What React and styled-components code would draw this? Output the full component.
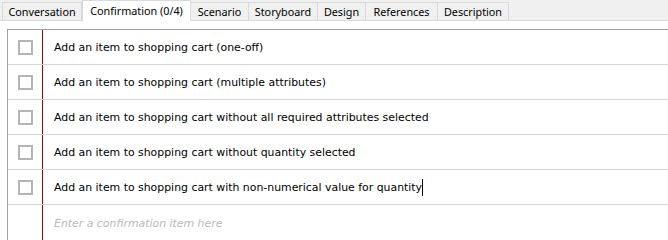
import styled, { createGlobalStyle } from "styled-components";

const Global = createGlobalStyle`
  body {
    margin: 0;
    background: #ffffff;
    font-family: "DejaVu Sans", Tahoma, sans-serif;
  }
`;

const Page = styled.div`
  width: 668px;
  height: 240px;
  overflow: hidden;
  background: #ffffff;
`;

const TabBar = styled.div`
  display: flex;
  align-items: flex-end;
  height: 21px;
  padding-left: 2px;
  background: #f0f0f0;
  border-bottom: 1px solid #d9d9d9;
  box-sizing: border-box;
`;

const Tab = styled.div`
  box-sizing: border-box;
  width: ${(p) => p.w}px;
  height: ${(p) => (p.active ? "21px" : "18px")};
  margin-bottom: ${(p) => (p.active ? "-1px" : "0")};
  padding-top: ${(p) => (p.active ? "2px" : "1px")};
  background: ${(p) => (p.active ? "#ffffff" : "#f0f0f0")};
  border: 1px solid #d9d9d9;
  border-bottom: none;
  border-left: ${(p) => (p.first || p.active ? "1px solid #d9d9d9" : "none")};
  font-family: "Noto Sans", sans-serif;
  font-size: 10.8px;
  line-height: 15px;
  text-align: center;
  color: #000000;
  white-space: nowrap;
`;

const Pane = styled.div`
  padding: 8px 0 0 7px;
`;

const List = styled.div`
  border-top: 1px solid #a0a0a0;
  border-left: 1px solid #a0a0a0;
`;

const Row = styled.div`
  display: flex;
  height: 35px;
  box-sizing: border-box;
  border-bottom: ${(p) => (p.last ? "none" : "1px solid #d4d4d4")};
`;

const CheckCell = styled.div`
  width: 35px;
  flex: none;
  display: flex;
  align-items: center;
  justify-content: center;
  border-right: 1px solid #a00000;
  box-sizing: border-box;
`;

const Box = styled.div`
  width: 15px;
  height: 15px;
  box-sizing: border-box;
  border: 2px solid #b4b4b4;
  background: #ffffff;
  margin: 1px 0 0 1px;
`;

const Text = styled.div`
  display: flex;
  align-items: center;
  padding: 1px 0 0 11px;
  font-size: 10.9px;
  color: ${(p) => (p.placeholder ? "#b8b8b8" : "#000000")};
  font-style: ${(p) => (p.placeholder ? "italic" : "normal")};
  white-space: nowrap;
`;

const Caret = styled.span`
  display: inline-block;
  width: 1px;
  height: 17px;
  background: #000000;
  vertical-align: middle;
`;

const tabs = [
  ["Conversation", 80],
  ["Confirmation (0/4)", 109],
  ["Scenario", 58],
  ["Storyboard", 69],
  ["Design", 48],
  ["References", 72],
  ["Description", 71],
];

const items = [
  "Add an item to shopping cart (one-off)",
  "Add an item to shopping cart (multiple attributes)",
  "Add an item to shopping cart without all required attributes selected",
  "Add an item to shopping cart without quantity selected",
  "Add an item to shopping cart with non-numerical value for quantity",
];

export default function App() {
  return (
    <Page>
      <Global />
      <TabBar>
        {tabs.map(([t, w], i) => (
          <Tab key={t} w={w} first={i === 0} active={i === 1}>
            {t}
          </Tab>
        ))}
      </TabBar>
      <Pane>
        <List>
          {items.map((item, i) => (
            <Row key={item}>
              <CheckCell>
                <Box />
              </CheckCell>
              <Text>
                {item}
                {i === items.length - 1 && <Caret />}
              </Text>
            </Row>
          ))}
          <Row last>
            <CheckCell />
            <Text placeholder>Enter a confirmation item here</Text>
          </Row>
        </List>
      </Pane>
    </Page>
  );
}
